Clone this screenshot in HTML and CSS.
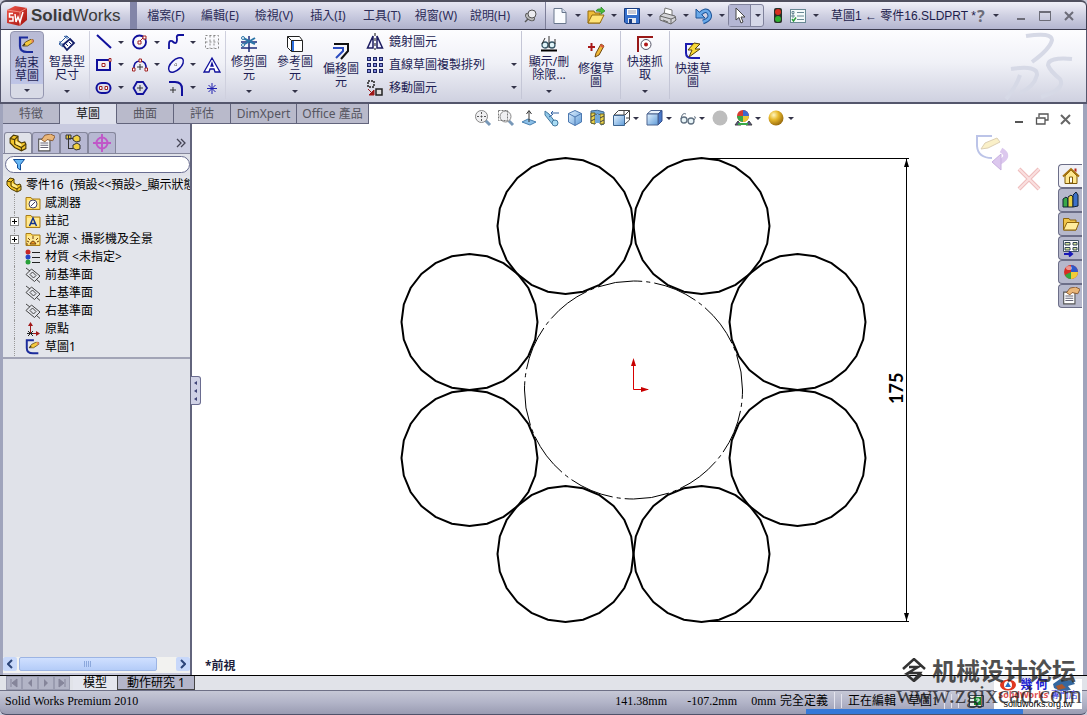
FILE: index.html
```html
<!DOCTYPE html>
<html lang="zh-Hant">
<head>
    <meta charset="UTF-8">
    <meta name="viewport" content="width=device-width, initial-scale=1.0">
    <title>草圖1 ← 零件16.SLDPRT *</title>
    <link rel="stylesheet" href="styles.css">
</head>
<body>
    <!-- Shared icons -->
    <svg class="defs" aria-hidden="true">
        <defs>
            <linearGradient id="blueGlass" x1="0" y1="0" x2="1" y2="1"><stop offset="0" stop-color="#e4f3ff"/><stop offset="1" stop-color="#5f9bd8"/></linearGradient>
            <radialGradient id="gold" cx=".35" cy=".3" r=".8"><stop offset="0" stop-color="#fff6c0"/><stop offset=".4" stop-color="#e8b92c"/><stop offset="1" stop-color="#8a5c08"/></radialGradient>
            <linearGradient id="redCube" x1="0" y1="0" x2="1" y2="1"><stop offset="0" stop-color="#f0564a"/><stop offset="1" stop-color="#a3100c"/></linearGradient>
            <symbol id="pencil" viewBox="0 0 12 8"><path d="M0 7 3 3 9 0 11 1 11 3 5 7Z" fill="#f4c83c" stroke="#54400c" stroke-width=".8"/><path d="M9 0 11 1 11 3 9 4Z" fill="#e08060"/><path d="M0 7 2 4.500 3 6Z" fill="#222"/></symbol>
            <symbol id="sketch" viewBox="0 0 18 18"><path d="M10 1.500H2V10Q2 16 9 16H15" fill="none" stroke="#1c2c9c" stroke-width="2.200"/><use href="#pencil" x="4" y="3" width="13" height="8"/></symbol>
            <symbol id="part" viewBox="0 0 16 16"><path d="M1 4 4 1 8 2 8 6 11 8 14 7 15 9 15 13 11 15 5 12 1 8Z" fill="#f2c52c" stroke="#4c3a04"/><path d="M1 4 5 5 8 2M5 5V9L11 12 15 9M11 12V15" fill="none" stroke="#4c3a04"/><path d="M6 6 11 9 11 11 6 9Z" fill="#ffeb8c"/></symbol>
            <symbol id="folder" viewBox="0 0 16 16"><path d="M1 2.500H6L7 4H15V14.500H1Z" fill="#ffdc60" stroke="#a87c18"/><path d="M2 5H14V13H2Z" fill="#ffe994"/></symbol>
            <symbol id="plane" viewBox="0 0 16 16"><path d="M1 7.500 6.500 2 15 9 9.500 14.500ZM1 1 5 4M11 12 15 15.500M5 7.500 7.500 5 11 8.500 8.500 11Z" fill="none" stroke="#444"/></symbol>
            <symbol id="hand" viewBox="0 0 16 16"><path d="M1.500 4.500H11.500V15H1.500Z" fill="#fff" stroke="#555"/><path d="M3 8H10M3 10H10M3 12H10" stroke="#667"/><path d="M4 5 7 1 12 0 16 2 14 6 9 5 7 7Z" fill="#eab678" stroke="#7a4a20" stroke-width=".7"/></symbol>
        </defs>
    </svg>

    <header class="titlebar">
        <div class="brand">
            <svg width="22" height="22" viewBox="0 0 22 22"><path d="M1 5 9 1 21 3V15L14 21 1 18Z" fill="url(#redCube)"/><path d="M1 5 14 7 21 3M14 7V21" stroke="#ffb0a0" fill="none" stroke-width=".7"/><path d="M7 8.500H3.500V12H7V16H3M9 9 10 17 12 12 14 17 17 7" fill="none" stroke="#fff" stroke-width="1.500"/></svg>
            <span><b>Solid</b>Works</span>
        </div>
        <nav class="menu">
            <button>檔案(F)</button>
            <button>編輯(E)</button>
            <button>檢視(V)</button>
            <button>插入(I)</button>
            <button>工具(T)</button>
            <button>視窗(W)</button>
            <button>說明(H)</button>
            <button class="pin" aria-label="釘選"><svg width="14" height="14" viewBox="0 0 14 14"><path d="M1 13 5 9" stroke="#555" stroke-width="1.500"/><ellipse cx="6" cy="8" rx="5" ry="3" transform="rotate(35 6 8)" fill="#bbb" stroke="#555"/><circle cx="8" cy="5" r="4" fill="#ececf0" stroke="#555"/></svg></button>
        </nav>
        <div class="quick">
            <button class="split" aria-label="新增"><svg width="18" height="18" viewBox="0 0 18 18"><path d="M3 1.500H11L15 5.500V16.500H3Z" fill="#fafcff" stroke="#68768c"/><path d="M11 1.500V5.500H15" fill="#d4dff0" stroke="#68768c"/></svg><i class="drop"></i></button>
            <button class="split" aria-label="開啟"><svg width="18" height="18" viewBox="0 0 18 18"><path d="M1 4H7L8 6H13V16H1Z" fill="#eebc38" stroke="#936b0c"/><path d="M1 16 5 8H17L13 16Z" fill="#ffe478" stroke="#936b0c"/><path d="M9 4Q10 1 14 2V0L18 4 14 7V5Q11 4 9 4Z" fill="#48bc38" stroke="#207820" stroke-width=".6"/></svg><i class="drop"></i></button>
            <button class="split" aria-label="儲存"><svg width="18" height="18" viewBox="0 0 18 18"><path d="M1.500 1.500H16.500V16.500H3L1.500 15Z" fill="#3670cc" stroke="#183c80"/><path d="M4 2H14V8H4Z" fill="#fff"/><path d="M5 4H13M5 6H13" stroke="#99a"/><path d="M5 11H13V16H5Z" fill="#e4e8f0"/><path d="M6 12H9V16H6Z" fill="#183c80"/></svg><i class="drop"></i></button>
            <button class="split" aria-label="列印"><svg width="18" height="18" viewBox="0 0 18 18"><path d="M5 8 6 1 13 3 13 9Z" fill="#fff" stroke="#777"/><path d="M1 9 5 6 16 9 17 13 12 17 1 13Z" fill="#d4d4d8" stroke="#666"/><path d="M1 9 12 12 17 10M12 12V17M4 13 9 15" stroke="#666" fill="none"/></svg><i class="drop"></i></button>
            <button class="split" aria-label="復原"><svg width="18" height="18" viewBox="0 0 18 18"><path d="M5 7Q11 1 14 6Q17 12 8 15" fill="none" stroke="#1c5498" stroke-width="4.500"/><path d="M1 2V11H10Z" fill="#68a8e8" stroke="#1c5498"/><path d="M5 7Q11 1 14 6Q17 12 8 15" fill="none" stroke="#68a8e8" stroke-width="2.500"/></svg><i class="drop"></i></button>
            <button class="split picked" aria-label="選取"><span><svg width="12" height="18" viewBox="0 0 12 18"><path d="M2 1V13L5 10.500 7 16 9 15 7 10H11Z" fill="#fff" stroke="#444"/></svg></span><i class="drop"></i></button>
            <button class="plain" aria-label="重新計算"><svg width="10" height="18" viewBox="0 0 10 18"><rect x="1" y="1" width="8" height="15" rx="2" fill="#283028"/><circle cx="5" cy="5" r="3" fill="#d83020"/><circle cx="5" cy="12" r="3" fill="#30b030"/></svg></button>
            <button class="split" aria-label="選項"><svg width="18" height="18" viewBox="0 0 18 18"><rect x="1.500" y="2.500" width="15" height="13" fill="#f4fafa" stroke="#688894"/><path d="M8 5.500H15M8 9H15M8 12.500H15" stroke="#688894"/><path d="M3 4.500H5V6.500H3ZM3 8H5V10H3Z" fill="none" stroke="#688894"/><path d="M3 12 4.500 14 7 10.500" fill="none" stroke="#2c9c3c" stroke-width="1.500"/></svg><i class="drop"></i></button>
        </div>
        <h1 class="doc-name">草圖1 ← 零件16.SLDPRT *</h1>
        <div class="window-buttons">
            <button class="split help" aria-label="說明">?<i class="drop"></i></button>
            <button aria-label="最小化"><svg width="12" height="12"><path d="M2 9H10" stroke="#6c6c78" stroke-width="2"/></svg></button>
            <button aria-label="最大化"><svg width="12" height="12"><path d="M.5 1.500H11.500V10.500H.5Z" fill="none" stroke="#6c6c78"/><path d="M0 2H12" stroke="#6c6c78" stroke-width="2"/></svg></button>
            <button aria-label="關閉"><svg width="12" height="12"><path d="M2 2 10 10M10 2 2 10" stroke="#6c6c78" stroke-width="2"/></svg></button>
        </div>
    </header>

    <section class="ribbon">
        <button class="tool exit">
            <svg width="18" height="18"><use href="#sketch"/></svg>
            <span>結束<br>草圖</span><i class="drop"></i>
        </button>
        <button class="tool">
            <svg width="18" height="18" viewBox="0 0 18 18"><path d="M5 10 12 4 16 8 9 15Z" fill="#fff" stroke="#101c68" stroke-width="1.800"/><path d="M1 9 9 1M1 9 5 12M9 1 12 4M2 6 2 9 5 9M6 1.500 9 1 9 4" fill="none" stroke="#2f5ca0"/><path d="M8 9 10 11M11 7 13 9" stroke="#101c68"/></svg>
            <span>智慧型<br>尺寸</span><i class="drop"></i>
        </button>
        <div class="sketch-grid">
            <button class="split" aria-label="直線"><svg width="18" height="18"><path d="M2 2 16 15" stroke="#10109c" stroke-width="2"/></svg><i class="drop"></i></button>
            <button class="split" aria-label="圓"><svg width="18" height="18"><circle cx="8.500" cy="9" r="6.500" fill="none" stroke="#10109c" stroke-width="1.800"/><path d="M8 9 13 4" stroke="#a02020"/><path d="M7 8H10V11H7ZM12 3H15V6H12Z" fill="#fff" stroke="#a02020"/></svg><i class="drop"></i></button>
            <button class="split" aria-label="不規則曲線"><svg width="18" height="18"><path d="M2 16V11Q2 7 5 8Q10 13 10 6Q9 2 12 2H17" fill="none" stroke="#10109c" stroke-width="1.800"/></svg><i class="drop"></i></button>
            <button class="split" aria-label="網格"><svg width="18" height="18"><path d="M2.500 2.500H15.500V15.500H2.500ZM2.500 9H15.500M7 2.500V15.500M11 2.500V15.500" fill="none" stroke="#888" stroke-dasharray="2 2"/></svg></button>
            <button class="split" aria-label="矩形"><svg width="18" height="18"><path d="M2 4H15V14H2Z" fill="none" stroke="#10109c" stroke-width="2"/><path d="M7 7.500H10V10.500H7ZM14 2.500H16V5.500H14Z" fill="#fff" stroke="#a02020"/></svg><i class="drop"></i></button>
            <button class="split" aria-label="弧"><svg width="18" height="18"><path d="M3 14Q2 5 9 5Q16 5 15 14" fill="none" stroke="#10109c" stroke-width="1.500"/><path d="M6 11H12M9 8V14" stroke="#333"/><path d="M1.500 12H4V15H1.500ZM14 12H16.500V15H14ZM8 3H10.500V6H8Z" fill="#fff" stroke="#a02020"/></svg><i class="drop"></i></button>
            <button class="split" aria-label="橢圓"><svg width="18" height="18"><ellipse cx="9" cy="9" rx="9" ry="5" transform="rotate(-43 9 9)" fill="#f4f4ff" stroke="#10109c" stroke-width="1.500"/><path d="M7 9H11M9 7V11" stroke="#666" stroke-dasharray="1 1"/></svg><i class="drop"></i></button>
            <button class="split" aria-label="文字"><svg width="18" height="18"><path d="M1 16 9 2 17 16H12L11 13H7L6 16ZM8 10H10L9 7Z" fill="#fff" stroke="#10109c" stroke-width="1.300"/></svg></button>
            <button class="split" aria-label="狹槽"><svg width="18" height="18"><rect x="1.500" y="4" width="14" height="10" rx="5" fill="none" stroke="#10109c" stroke-width="2"/><path d="M4.500 7.500H7V10.500H4.500ZM10 7.500H12.500V10.500H10Z" fill="#fff" stroke="#a02020"/></svg><i class="drop"></i></button>
            <button class="split" aria-label="多邊形"><svg width="18" height="18"><path d="M6 3H12L16 9 12 15H6L2.500 9Z" fill="none" stroke="#10109c" stroke-width="1.800"/><path d="M6 9H12M9 6V12" stroke="#333"/></svg></button>
            <button class="split" aria-label="圓角"><svg width="18" height="18"><path d="M2 3H8Q15 3 15 10V17" fill="none" stroke="#10109c" stroke-width="2"/><path d="M3 11H9M6 8V14" stroke="#333"/></svg><i class="drop"></i></button>
            <button class="split" aria-label="點"><svg width="18" height="18"><path d="M9 4V15M4 9.500H14M5.500 6 12.500 13M12.500 6 5.500 13" stroke="#2020b0"/></svg></button>
        </div>
        <button class="tool">
            <svg width="18" height="18"><path d="M1 7H17M1 13H17M9 1V17" stroke="#1c2c7c" stroke-width="1.500"/><path d="M3 3 15 9M3 10 15 3" stroke="#2d76a8" stroke-width="2"/><circle cx="3" cy="3" r="1.500" fill="#fff" stroke="#2d76a8"/><circle cx="3" cy="10" r="1.500" fill="#fff" stroke="#2d76a8"/></svg>
            <span>修剪圖<br>元</span><i class="drop"></i>
        </button>
        <button class="tool">
            <svg width="18" height="18"><path d="M1.500 1.500H13.500L16.500 5.500V16.500H5.500L1.500 12.500ZM1.500 1.500 5.500 5.500H16.500M5.500 5.500V16.500" fill="#fff" stroke="#222"/><path d="M6 6H8V16H6Z" fill="#2c70e0"/></svg>
            <span>參考圖<br>元</span><i class="drop"></i>
        </button>
        <button class="tool no-drop">
            <svg width="18" height="18"><path d="M2 2H16V9L9 17" fill="none" stroke="#111" stroke-width="2"/><path d="M1 6H11V9L4 16" fill="none" stroke="#2c4cc0" stroke-width="2"/></svg>
            <span>偏移圖<br>元</span>
        </button>
        <div class="tool-list">
            <button><svg width="18" height="18"><path d="M7 3 1.500 15H7ZM11 3 16.500 15H11Z" fill="#eef" stroke="#1c1c60" stroke-width="1.500"/><path d="M9 0V17" stroke="#111" stroke-dasharray="3 2"/></svg>鏡射圖元</button>
            <button><svg width="18" height="18"><path d="M1 1H5V5H1ZM7 1H11V5H7ZM13 1H17V5H13ZM1 7H5V11H1ZM7 7H11V11H7ZM13 7H17V11H13ZM1 13H5V17H1ZM7 13H11V17H7ZM13 13H17V17H13Z" fill="#1c2464"/><path d="M2 2H4V4H2ZM8 2H10V4H8ZM14 2H16V4H14ZM2 8H4V10H2ZM8 8H10V10H8ZM14 8H16V10H14ZM2 14H4V16H2ZM8 14H10V16H8ZM14 14H16V16H14Z" fill="#8088d8"/></svg>直線草圖複製排列<i class="drop"></i></button>
            <button><svg width="18" height="18"><path d="M2 2H8V8H2Z" fill="none" stroke="#222" stroke-width="1.500" stroke-dasharray="2 1"/><path d="M10 10H16V16H10Z" fill="#ddd" stroke="#222" stroke-width="1.500"/><path d="M2 10 6 14M3 16H8V11Z" fill="#a01818" stroke="#a01818"/></svg>移動圖元<i class="drop"></i></button>
        </div>
        <button class="tool">
            <svg width="18" height="18"><circle cx="5" cy="10" r="3" fill="#e0f4f8" stroke="#385868" stroke-width="1.300"/><circle cx="12" cy="10" r="3" fill="#e0f4f8" stroke="#385868" stroke-width="1.300"/><path d="M2 9 5 3M15 9 15 4M9 1V13" fill="none" stroke="#333"/><path d="M1 15.500H17" stroke="#000" stroke-width="2"/></svg>
            <span>顯示/刪<br>除限...</span><i class="drop"></i>
        </button>
        <button class="tool no-drop last">
            <svg width="18" height="18"><path d="M1 5H8M4.500 1V9" stroke="#a81818" stroke-width="2"/><path d="M8 15 9 11 14 2 17 4 12 13Z" fill="#f0b838" stroke="#70480c"/><path d="M14 2 17 4 16 6 13 4Z" fill="#d85840"/></svg>
            <span>修復草<br>圖</span>
        </button>
        <button class="tool last">
            <svg width="18" height="18"><path d="M2 17V2H17" fill="none" stroke="#981818" stroke-width="2"/><circle cx="10" cy="9.500" r="5" fill="#fff" stroke="#556"/><circle cx="10" cy="9.500" r="2" fill="#b01818"/></svg>
            <span>快速抓<br>取</span><i class="drop"></i>
        </button>
        <button class="tool no-drop">
            <svg width="18" height="18"><path d="M9 2H2V11Q2 16 8 16H16" fill="none" stroke="#1c1cb0" stroke-width="2"/><path d="M10 1 4 8H8L5 15 16 7H11L16 2Z" fill="#f8d838" stroke="#584408"/></svg>
            <span>快速草<br>圖</span>
        </button>
        <svg class="ds-logo" width="70" height="70" viewBox="-4 0 70 70"><path d="M18 5Q44 1 44 9Q42 18 24 31"/><path d="M3 38Q30 34 29 44Q26 56 12 62M12 44Q8 56-2 68"/><path d="M64 28Q40 26 40 34Q42 40 52 48Q58 58 33 66"/></svg>
    </section>

    <main class="workspace">
        <nav class="ribbon-tabs">
            <button>特徵</button>
            <button class="active">草圖</button>
            <button>曲面</button>
            <button>評估</button>
            <button class="wide">DimXpert</button>
            <button class="wider">Office 產品</button>
        </nav>

        <div class="body">
            <aside class="manager">
                <div class="manager-tabs">
                    <button class="active" aria-label="特徵管理員"><svg width="18" height="18"><use href="#part"/></svg></button>
                    <button aria-label="屬性"><svg width="18" height="18"><use href="#hand"/></svg></button>
                    <button aria-label="模型組態"><svg width="18" height="18"><path d="M3.500 1V15M3.500 4.500H8M3.500 14.500H8M1 1H6V5H1Z" fill="#e8c838" stroke="#333"/><path d="M8 3 12 1 15 3V7L11 8 8 6ZM8 11 12 9 15 11V15L11 16 8 14Z" fill="#f0d040" stroke="#333"/></svg></button>
                    <button aria-label="尺寸專家"><svg width="18" height="18"><circle cx="9" cy="9" r="5.500" fill="none" stroke="#c058c8" stroke-width="2"/><path d="M9 0V18M0 9H18" stroke="#c058c8" stroke-width="2"/></svg></button>
                    <button class="more" aria-label="更多"><svg width="10" height="10"><path d="M1 1 5 5 1 9M5 1 9 5 5 9" fill="none" stroke="#445" stroke-width="1.300"/></svg></button>
                </div>
                <label class="filter">
                    <svg width="12" height="13"><path d="M.5 1.500H11.500L7.500 6.500V12L4.500 10V6.500Z" fill="#68b8f4" stroke="#104c98"/></svg>
                    <input type="text" aria-label="篩選">
                </label>
                <ul class="tree">
                    <li class="root"><svg width="16" height="16"><use href="#part"/></svg>零件16&nbsp; (預設&lt;&lt;預設&gt;_顯示狀態</li>
                    <li><svg width="16" height="16"><use href="#folder"/><circle cx="8" cy="9" r="4" fill="#fff" stroke="#446"/><path d="M6 11 10 7" stroke="#446"/></svg>感測器</li>
                    <li><button class="expand" aria-label="展開"></button><svg width="16" height="16"><use href="#folder"/><path d="M4.500 13 8 5 11.500 13M6 10.500H10" stroke="#14348c" stroke-width="1.500" fill="none"/></svg>註記</li>
                    <li><button class="expand" aria-label="展開"></button><svg width="16" height="16"><use href="#folder"/><path d="M5 13Q8 7 11 13ZM3 13H1M8 8V5M5 9 3 7M11 9 13 7M4 11 2 10M12 11 14 10" fill="#f4a020" stroke="#704010"/></svg>光源、攝影機及全景</li>
                    <li><svg width="16" height="16"><circle cx="3" cy="3" r="2.500" fill="#c82828"/><circle cx="3" cy="8" r="2.500" fill="#2848c8"/><circle cx="3" cy="13" r="2.500" fill="#28a038"/><path d="M7 3.500H15M7 8.500H15M7 13.500H15" stroke="#222"/></svg>材質 &lt;未指定&gt;</li>
                    <li><svg width="16" height="16"><use href="#plane"/></svg>前基準面</li>
                    <li><svg width="16" height="16"><use href="#plane"/></svg>上基準面</li>
                    <li><svg width="16" height="16"><use href="#plane"/></svg>右基準面</li>
                    <li><svg width="16" height="16"><path d="M5.500 12V3M5 12.500H13" stroke="#a01818"/><path d="M5.500 1 8 5H3ZM15 12.500 11 10V15Z" fill="#a01818"/><path d="M3 10 8 15M8 10 3 15M2 12.500H8" stroke="#222"/></svg>原點</li>
                    <li><svg width="16" height="16"><use href="#sketch"/></svg>草圖1</li>
                </ul>
                <div class="scrollbar">
                    <button aria-label="向左"><svg width="6" height="10"><path d="M5 1 1 5 5 9" fill="none" stroke="#2c4478" stroke-width="2"/></svg></button>
                    <div class="thumb"></div>
                    <button aria-label="向右"><svg width="6" height="10"><path d="M1 1 5 5 1 9" fill="none" stroke="#2c4478" stroke-width="2"/></svg></button>
                </div>
                <button class="splitter" aria-label="收合面板"><svg width="5" height="22"><path d="M4 1V5L1 3ZM4 9V13L1 11ZM4 17V21L1 19Z" fill="#404478"/></svg></button>
            </aside>

            <section class="canvas">
                <svg class="drawing" viewBox="192 124 891 551" preserveAspectRatio="xMinYMin slice">
                    <defs>
                        <polygon id="ring" points="0,-68 17.600,-65.700 34,-58.900 48.100,-48.100 58.900,-34 65.700,-17.600 68,0 65.700,17.600 58.900,34 48.100,48.100 34,58.900 17.600,65.700 0,68 -17.600,65.700 -34,58.900 -48.100,48.100 -58.900,34 -65.700,17.600 -68,0 -65.700,-17.600 -58.900,-34 -48.100,-48.100 -34,-58.900 -17.600,-65.700"/>
                    </defs>
                    <g class="solid">
                        <use href="#ring" x="565.500" y="226"/><use href="#ring" x="701.500" y="226"/>
                        <use href="#ring" x="469.500" y="322"/><use href="#ring" x="797.500" y="322"/>
                        <use href="#ring" x="469.500" y="458"/><use href="#ring" x="797.500" y="458"/>
                        <use href="#ring" x="565.500" y="554"/><use href="#ring" x="701.500" y="554"/>
                    </g>
                    <circle class="construction" cx="633.500" cy="390" r="109"/>
                    <path class="dimension" d="M702 158.500H909M702 621.500H909M906.500 159V621"/>
                    <path d="M906.500 159 909 167H904ZM906.500 621 909 613H904Z"/>
                    <text class="dim-text" transform="translate(903 404) rotate(-90)">175</text>
                    <path class="origin" d="M633.500 360V389.500H648"/>
                    <path class="origin-head" d="M633.500 358 636 366H631ZM649 389.500 641 387V392Z"/>
                </svg>
                <span class="view-name">*前視</span>
            </section>
        </div>

        <!-- Tools floating over the model view -->
        <div class="view-tools">
            <button aria-label="最適當大小"><svg width="18" height="18"><path d="M11 11 16 16" stroke="#7898b8" stroke-width="3"/><circle cx="7.500" cy="7.500" r="6" fill="#f0f0f2" stroke="#888"/><path d="M7.500 3V12M3 7.500H12" stroke="#555" stroke-dasharray="2 1.500"/></svg></button>
            <button aria-label="局部放大"><svg width="18" height="18"><path d="M11 11 16 16" stroke="#7898b8" stroke-width="3"/><circle cx="8.500" cy="7.500" r="5.500" fill="#f0f0f2" stroke="#888"/><path d="M1.500 1.500H10.500V11.500H1.500Z" fill="none" stroke="#777" stroke-dasharray="2 1"/></svg></button>
            <button aria-label="正視於"><svg width="18" height="18"><path d="M2 13 8 10 16 13 10 16Z" fill="#8cc0e8" stroke="#4880b0"/><path d="M9 13V2M6.500 5 9 1.500 11.500 5" fill="none" stroke="#333"/></svg></button>
            <button aria-label="前一視角"><svg width="18" height="18"><path d="M2 2 6 5 13 14 10 16 2 6Z" fill="#90c8e8" stroke="#4478a0"/><path d="M8 4H16M10 2 8 4 10 6M6 8 9 6" fill="none" stroke="#3060a0"/><circle cx="12" cy="14" r="3" fill="#a8dcf4" stroke="#4478a0"/></svg></button>
            <button aria-label="等角視"><svg width="18" height="18"><path d="M9 1.500 15.500 4.500V13L9 16.500 2.500 13V4.500Z" fill="url(#blueGlass)" stroke="#4c78b0"/><path d="M2.500 4.500 9 8 15.500 4.500M9 8V16.500" fill="none" stroke="#4c78b0"/></svg></button>
            <button aria-label="剖面視角"><svg width="18" height="18"><path d="M2 2Q8 0 15 3V15L12 16V6Q8 4 6 6V15L2 14Z" fill="#70a8d8" stroke="#3c6490"/><path d="M2 4H6V15L2 14ZM11 5H15V15H11Z" fill="#ecd44c" stroke="#6c6420"/><path d="M6 6H11V14H6Z" fill="#70a8d8"/><path d="M2 8 6 6M2 12 6 10M11 9 15 7M11 13 15 11" stroke="#444"/></svg></button>
            <button class="split" aria-label="視角方位"><svg width="20" height="18"><path d="M6.500 1.500H17.500V11L13 15M12 1.500V6M6.500 1.500 2 6M2 6 13 6 17.500 1.500M14 9H18" fill="none" stroke="#444"/><path d="M1.500 6.500H12.500V16.500H1.500Z" fill="url(#blueGlass)" stroke="#3c6490"/></svg><i class="drop"></i></button>
            <button class="split" aria-label="顯示樣式"><svg width="20" height="18"><path d="M2 5 6 1.500H17L13 5Z" fill="#e8f2fc" stroke="#4c6490"/><path d="M13 5 17 1.500V12L13 16Z" fill="#4878c8" stroke="#34508c"/><path d="M2 5H13V16H2Z" fill="url(#blueGlass)" stroke="#4c6490"/></svg><i class="drop"></i></button>
            <button class="split" aria-label="隱藏/顯示"><svg width="20" height="18"><circle cx="6" cy="11" r="3" fill="#e8f4f8" stroke="#607080" stroke-width="1.300"/><circle cx="13" cy="12" r="3" fill="#e8f4f8" stroke="#607080" stroke-width="1.300"/><path d="M3 10Q4 3 8 5M16 11Q19 7 16 8" fill="none" stroke="#607080"/></svg><i class="drop"></i></button>
            <button aria-label="編輯外觀"><svg width="18" height="18"><circle cx="9" cy="9" r="7.500" fill="#bdbdbd"/></svg></button>
            <button class="split" aria-label="套用全景"><svg width="20" height="18"><path d="M1 16 4 12 7 16ZM12 16 15 12 18 16Z" fill="#558" stroke="#444"/><circle cx="9" cy="7" r="6" fill="#d83c30"/><path d="M9 7V1A6 6 0 0 1 15 7Z" fill="#3c68d0"/><path d="M9 7H15A6 6 0 0 1 9 13Z" fill="#e8c838"/><path d="M9 7V13A6 6 0 0 1 3 7Z" fill="#38a848"/><path d="M4 15H14" stroke="#38a848" stroke-width="2"/></svg><i class="drop"></i></button>
            <button class="split" aria-label="檢視設定"><svg width="20" height="18"><circle cx="9" cy="9" r="7.500" fill="url(#gold)"/></svg><i class="drop"></i></button>
        </div>
        <div class="doc-buttons">
            <button aria-label="最小化"><svg width="14" height="14"><path d="M3 10H11" stroke="#555" stroke-width="2"/></svg></button>
            <button aria-label="還原"><svg width="14" height="14"><path d="M4 5V2H13V8H10M1.500 6H10V12H1.500Z" fill="none" stroke="#555" stroke-width="1.300"/></svg></button>
            <button aria-label="關閉"><svg width="14" height="14"><path d="M3 3 12 12M12 3 3 12" stroke="#666" stroke-width="2"/></svg></button>
        </div>
        <div class="confirm">
            <button aria-label="確定"><svg width="34" height="38"><path d="M16 2H1V12Q2 24 16 24" fill="none" stroke="#bcc4e8" stroke-width="2"/><path d="M5 15 9 9 21 4 24 8 12 14Z" fill="#faf0c8" stroke="#dccfb4"/><path d="M25 16Q35 22 24 28" fill="none" stroke="#dcc8ee" stroke-width="5"/><path d="M16 28 25 20V36Z" fill="#dcc8ee" stroke="#c8b0e0"/></svg></button>
            <button class="cancel" aria-label="取消"><svg width="24" height="24"><path d="M2 2 22 22M22 2 2 22" stroke="#eebcbc" stroke-width="4"/><path d="M2 2 22 22M22 2 2 22" stroke="#fae0e0" stroke-width="2"/></svg></button>
        </div>
        <nav class="task-pane">
            <button class="active" aria-label="首頁"><svg width="18" height="18"><path d="M3 9V16.500H15V9L9 3Z" fill="#ffe890" stroke="#7c5808"/><path d="M1 9.500 9 2 17 9.500" fill="none" stroke="#a87410" stroke-width="2"/><path d="M7.500 10H10.500V16H7.500Z" fill="#fff" stroke="#7c5808"/><path d="M12.500 1.500H14.500V5L12.500 4Z" fill="#b82818"/></svg></button>
            <button aria-label="設計庫"><svg width="18" height="18"><path d="M1 8 4 6 6 8V16H1Z" fill="#38a848" stroke="#123"/><path d="M6 6 9 4 11 6V16H6Z" fill="#e8d040" stroke="#123"/><path d="M11 4 14 1 16 4V15L11 16Z" fill="#3c70c8" stroke="#123"/></svg></button>
            <button aria-label="檔案總管"><svg width="18" height="18"><path d="M1.500 3.500H7L8 5H14V15H1.500Z" fill="#f0c448" stroke="#8c640c"/><path d="M1.500 15 5 7.500H17L14 15Z" fill="#ffec9c" stroke="#8c640c"/></svg></button>
            <button aria-label="視圖調色盤"><svg width="18" height="18"><path d="M1.500 1.500H16.500V12.500H1.500Z" fill="#fff" stroke="#456"/><path d="M3 3.500H8V6H3ZM3 8.500H8V11H3ZM11 3.500H15V6H11ZM11 8.500H15V11H11Z" fill="#d8e89c" stroke="#345"/><path d="M2 15H9M7 12.500 10 15 7 17.500" fill="none" stroke="#1818b8" stroke-width="2"/></svg></button>
            <button aria-label="外觀"><svg width="18" height="18"><circle cx="9" cy="9" r="7" fill="#d82c20"/><path d="M9 9V2A7 7 0 0 1 16 9Z" fill="#3058c8"/><path d="M9 9H16A7 7 0 0 1 9 16Z" fill="#f0cc38"/><path d="M9 9V16A7 7 0 0 1 3 12Z" fill="#30a840"/><ellipse cx="7" cy="5" rx="3" ry="2" fill="#fff" opacity=".5"/></svg></button>
            <button aria-label="自訂屬性"><svg width="18" height="18"><use href="#hand"/></svg></button>
        </nav>
    </main>

    <nav class="model-tabs">
        <button class="nav" disabled aria-label="第一個"><svg width="10" height="10"><path d="M2 1V9M8 1V9L3 5Z" fill="#85859a" stroke="#85859a"/></svg></button>
        <button class="nav" disabled aria-label="上一個"><svg width="10" height="10"><path d="M7 1V9L3 5Z" fill="#85859a"/></svg></button>
        <button class="nav" disabled aria-label="下一個"><svg width="10" height="10"><path d="M3 1V9L7 5Z" fill="#85859a"/></svg></button>
        <button class="nav" disabled aria-label="最後一個"><svg width="10" height="10"><path d="M8 1V9M2 1V9L7 5Z" fill="#85859a" stroke="#85859a"/></svg></button>
        <button class="tab active">模型</button>
        <button class="tab study">動作研究 1</button>
    </nav>

    <footer class="status">
        <span class="product">Solid Works Premium 2010</span>
        <span class="coord">141.38mm</span>
        <span class="coord">-107.2mm</span>
        <span class="depth">0mm</span>
        <span class="cell">完全定義</span>
        <span class="cell gap"></span>
        <span class="cell">正在編輯‧草圖1</span>
        <span class="cell gap"></span>
        <span class="cell gap"></span>
        <svg class="help-mark" width="15" height="14"><path d="M.5 1.500H14.500V12.500H.5Z" fill="#e8ece8" stroke="#345"/><path d="M5 3H12V11H5Z" fill="#188830"/><path d="M7 5H10V7H8V9" fill="none" stroke="#fff"/></svg>
        <div class="progress"></div>
    </footer>

    <div class="sponsor">
        <div class="sponsor-top">
            <svg width="16" height="12"><ellipse cx="8" cy="6" rx="8" ry="5.500" fill="#e03820"/><circle cx="8" cy="6" r="4" fill="#fff"/><path d="M8 3 11 8H5Z" fill="#2870c0"/></svg>
            <b>幾 何</b>
            <svg width="24" height="14"><path d="M1 6 8 1 13 3 20 2 23 6 16 8 19 12 8 13 2 10Z" fill="#3468a0"/><path d="M4 8 10 6 14 10 6 12Z" fill="#a85830"/></svg>
        </div>
        <div class="sponsor-mid"><b>SolidWorks</b> <span>專門店</span></div>
        <div class="sponsor-url">solidworks.org.tw</div>
    </div>
    <div class="watermark">
        <div class="mark-name"><svg width="24" height="24"><path d="M1 11 12 1 23 11M7 9H16L6 15H18L12 22M4 16 12 23 20 16" fill="none" stroke="#333" stroke-width="2.500"/></svg>机械设计论坛</div>
        <div class="mark-url">www.zgjxcad.com</div>
    </div>
</body>
</html>
```
FILE: styles.css
```css
* {
    box-sizing: border-box;
}
body {
    margin: 0;
    min-height: 100vh;
    display: flex;
    flex-direction: column;
    position: relative;
    overflow: hidden;
    background: #c9cad9;
    color: #000;
    font-family: "Noto Sans", "Noto Sans CJK TC", sans-serif;
    font-size: 12px;
    line-height: 18px;
}
button {
    padding: 0;
    border: 0;
    background: none;
    color: inherit;
    font: inherit;
    display: flex;
    align-items: center;
    justify-content: center;
}
svg {
    display: block;
    flex: none;
}
.defs {
    position: absolute;
    width: 0;
    height: 0;
}
.drop {
    border: 3px solid transparent;
    border-top-color: #333348;
    border-bottom: 0;
    flex: none;
}
.split {
    width: 36px;
    gap: 6px;
    justify-content: flex-start;
}

/* Title bar */
.titlebar {
    height: 30px;
    display: flex;
    align-items: stretch;
    background: linear-gradient(#f0f0f8, #cfd0e2 50%, #b4b6d0);
    border: 1px solid #3c3c50;
    border-top: 2px solid #50505f;
    border-radius: 6px 6px 0 0;
    color: #1d1d4c;
}
.brand {
    width: 129px;
    flex: none;
    padding-left: 5px;
    display: flex;
    align-items: center;
    gap: 3px;
    font: 17px "Liberation Sans", sans-serif;
    color: #3a3a3a;
}
.menu {
    display: flex;
    border-left: 7px solid #8285a8;
    border-right: 1px solid #7c7e98;
    padding-left: 2px;
    background: linear-gradient(#e6e6f2, #c4c6dc 60%, #b0b2cc);
}
.menu button {
    width: 54px;
    color: #2c2c58;
}
.menu .pin {
    width: 28px;
}
.quick {
    display: flex;
    align-items: center;
    padding-left: 5px;
}
.quick .plain {
    width: 22px;
}
.quick .picked {
    height: 23px;
    margin: 0 3px 0 -3px;
    border: 1px solid #80829c;
    border-radius: 3px;
    background: #d6d8e8;
    gap: 4px;
}
.picked span {
    height: 21px;
    width: 22px;
    padding: 2px 5px;
    background: #b4b6d4;
    border-right: 1px solid #80829c;
}
.doc-name {
    margin: 0 0 0 6px;
    font: 12px/28px "Liberation Sans", "Noto Sans CJK TC", sans-serif;
    white-space: nowrap;
}
.window-buttons {
    margin-left: auto;
    padding-right: 11px;
    display: flex;
    align-items: center;
    gap: 12px;
}
.window-buttons .help {
    width: 26px;
    gap: 8px;
    font-size: 16px;
    font-weight: bold;
    color: #6c6c78;
}

/* Command ribbon */
.ribbon {
    height: 74px;
    display: flex;
    align-items: stretch;
    padding: 1px 12px 3px 9px;
    border: 1px solid #54566c;
    border-width: 0 1px 2px;
    background: linear-gradient(#fdfdff, #f0f1f7 45%, #cfd1e0);
    color: #1d1d54;
}
.tool {
    width: 46px;
    flex: none;
    padding: 4px 0 3px;
    flex-direction: column;
    justify-content: flex-start;
    line-height: 13px;
    white-space: nowrap;
}
.tool span {
    margin-top: 2px;
}
.tool .drop {
    margin-top: auto;
    margin-bottom: 3px;
}
.tool.no-drop {
    padding-top: 11px;
}
.tool.last {
    width: 49px;
    border-right: 1px solid #c4c6d6;
}
.tool.exit {
    width: 34px;
    margin-right: 5px;
    border: 1px solid #9496b0;
    border-radius: 4px;
    background: linear-gradient(#b8bad4, #bec4e6 78%, #d8dae6 79%);
}
.exit + .tool {
    width: 36px;
}
.sketch-grid {
    display: grid;
    grid-template-columns: repeat(3, 36px) 22px;
    margin-left: 4px;
    padding-left: 5px;
    border: 1px solid #cfd0de;
    border-width: 0 1px;
}
.sketch-grid .split {
    gap: 5px;
    width: auto;
}
.tool-list {
    width: 158px;
    padding-left: 2px;
    margin-right: 4px;
    display: grid;
    border-right: 1px solid #c4c6d6;
}
.tool-list button {
    gap: 5px;
    justify-content: flex-start;
}
.tool-list .drop {
    margin-left: auto;
    margin-right: 4px;
}
.ds-logo {
    margin-left: auto;
    fill: none;
    stroke: #d6d9e6;
    stroke-width: 4;
    stroke-linejoin: round;
}

/* Work area */
.workspace {
    flex: 1;
    position: relative;
    display: flex;
    flex-direction: column;
    min-height: 0;
    border: 3px solid #a0a4bc;
    border-width: 0 4px 0 3px;
    background: #fff;
}
.ribbon-tabs {
    height: 20px;
    display: flex;
    width: max-content;
}
.ribbon-tabs button {
    width: 57px;
    border: 1px solid #62647c;
    border-left-width: 0;
    border-top: 0;
    background: #b9bacb;
    color: #55555f;
}
.ribbon-tabs .active {
    background: #dfe1ec;
    border-bottom-color: #dfe1ec;
    color: #111;
}
.ribbon-tabs .wide {
    width: 66px;
}
.ribbon-tabs .wider {
    width: 72px;
}
.body {
    flex: 1;
    display: flex;
    min-height: 0;
}
.manager {
    width: 189px;
    flex: none;
    position: relative;
    z-index: 1;
    display: flex;
    flex-direction: column;
    border-right: 2px solid #62647c;
    background: #e0e2e9;
}
.manager-tabs {
    height: 30px;
    display: flex;
    align-items: flex-end;
    padding: 0 4px 0 1px;
    background: #c9cbe0;
    border-bottom: 1px solid #85879c;
}
.manager-tabs button {
    width: 28px;
    height: 21px;
    border: 1px solid #85879c;
    border-bottom: 0;
    border-radius: 3px 3px 0 0;
    background: #b7b8d2;
}
.manager-tabs .active {
    background: #e0e2e9;
}
.manager-tabs .more {
    width: 10px;
    margin-left: auto;
    border: 0;
    background: none;
}
.filter {
    height: 17px;
    margin: 2px 0 3px 2px;
    padding-left: 7px;
    display: flex;
    align-items: center;
    border: 1px solid #686c90;
    border-radius: 9px;
    background: #fff;
}
.filter input {
    flex: 1;
    min-width: 0;
    height: 14px;
    border: 0;
    background: none;
    font: inherit;
    outline: none;
}
.tree {
    margin: 0;
    padding: 0 0 1px 3px;
    list-style: none;
    overflow: hidden;
    white-space: nowrap;
    border-bottom: 2px solid #a2a4b6;
    background: #e3e5eb;
}
.tree li {
    height: 18px;
    margin-left: 8px;
    padding-left: 10px;
    display: flex;
    align-items: center;
    gap: 4px;
    position: relative;
    border-left: 1px dotted #999;
}
.tree .root {
    margin-left: 0;
    padding-left: 0;
    border: 0;
}
.expand {
    position: absolute;
    left: -5px;
    width: 9px;
    height: 9px;
    border: 1px solid #888;
    background: linear-gradient(#000, #000) center / 5px 1px no-repeat, linear-gradient(#000, #000) center / 1px 5px no-repeat, #fff;
}
.scrollbar {
    margin-top: auto;
    height: 18px;
    padding: 0 0 2px;
    display: flex;
    background: #f2f2f0;
    border-bottom: 2px solid #c6c8da;
}
.scrollbar button {
    width: 14px;
    background: #c8d8fa;
    border-radius: 2px;
}
.scrollbar .thumb {
    width: 138px;
    margin: 0 auto 0 2px;
    border: 1px solid #9cb4e4;
    border-radius: 2px;
    background: repeating-linear-gradient(90deg, #8ca8dc 0 1px, transparent 1px 2px) center / 8px 6px no-repeat, linear-gradient(#d0e0ff, #b4ccf8);
}
.splitter {
    position: absolute;
    left: 188px;
    top: 252px;
    width: 10px;
    height: 29px;
    border: 1px solid #6a6c90;
    border-left: 0;
    border-radius: 0 3px 3px 0;
    background: #d0d2e6;
}
.canvas {
    flex: 1;
    min-width: 0;
    position: relative;
    background: #fff;
}
.drawing {
    width: 100%;
    height: 100%;
}
.solid {
    fill: none;
    stroke: #000;
    stroke-width: 2;
}
.construction {
    fill: none;
    stroke: #000;
    stroke-dasharray: 45 4 4 4;
    stroke-dashoffset: 36;
}
.dimension {
    fill: none;
    stroke: #000;
}
.dim-text {
    font: bold 18px "Lato", sans-serif;
}
.origin {
    fill: none;
    stroke: #d80000;
}
.origin-head {
    fill: #c80000;
}
.view-name {
    position: absolute;
    left: 13px;
    bottom: 0;
    color: #1d1d3c;
    font-weight: bold;
}

/* Overlays on the model view */
.view-tools {
    position: absolute;
    left: 471px;
    top: 4px;
    height: 20px;
    display: flex;
    gap: 5px;
}
.view-tools .split {
    width: 28px;
    gap: 1px;
}
.doc-buttons {
    position: absolute;
    right: 11px;
    top: 8px;
    display: flex;
    gap: 9px;
}
.confirm {
    position: absolute;
    right: 42px;
    top: 30px;
    display: flex;
    align-items: flex-start;
    gap: 7px;
}
.confirm .cancel {
    margin-top: 33px;
}
.task-pane {
    position: absolute;
    right: 1px;
    top: 60px;
}
.task-pane button {
    width: 24px;
    height: 24px;
    border: 1px solid #6c6e88;
    border-right: 0;
    border-radius: 4px 0 0 4px;
    background: #b6b8cc;
}
.task-pane .active {
    background: #f0f0f6;
}

/* Bottom tabs and status bar */
.model-tabs {
    height: 16px;
    padding-left: 6px;
    display: flex;
    background: #e1e3e9;
    border-top: 1px solid #000;
    border-bottom: 1px solid #6e7086;
    line-height: 14px;
}
.model-tabs .nav {
    width: 16px;
    border: 1px solid #9a9cb0;
    background: #b2b4c6;
}
.model-tabs .tab {
    width: 44px;
    margin-left: 3px;
    background: #e4e6ee;
}
.model-tabs .study {
    width: 78px;
    margin-left: 0;
    border: 1px solid #444;
    border-top: 0;
    background: #b4b6ca;
}
.status {
    position: relative;
    height: 24px;
    padding: 0 103px 4px 5px;
    display: flex;
    align-items: center;
    background: linear-gradient(#c6c8d6, #b2b4c8 50%, #9a9cb2);
    border-bottom: 1px solid #50526a;
    border-radius: 0 0 6px 6px;
    font-family: "Liberation Serif", "Noto Sans CJK TC", serif;
    white-space: nowrap;
}
.product {
    margin-right: auto;
}
.coord {
    width: 70px;
    text-align: right;
}
.depth {
    width: 39px;
    margin-right: 4px;
    text-align: right;
}
.cell {
    padding-right: 6px;
    margin-right: 6px;
    border-right: 1px solid #e4e4ee;
}
.cell.gap {
    padding: 0;
    height: 14px;
}
.help-mark {
    margin-left: 4px;
}
.progress {
    position: absolute;
    right: 64px;
    bottom: 0;
    width: 217px;
    height: 5px;
    background: #3478d8;
}

/* Stamps in the corner */
.sponsor {
    position: absolute;
    right: 5px;
    bottom: 6px;
    width: 88px;
    height: 30px;
    background: #fff;
    text-align: center;
    line-height: 10px;
    white-space: nowrap;
}
.sponsor-top {
    display: flex;
    gap: 4px;
    height: 11px;
    align-items: center;
    justify-content: center;
    color: #2020d0;
}
.sponsor-mid {
    font-size: 9px;
    color: #3838d8;
}
.sponsor-mid b {
    color: #e05050;
}
.sponsor-url {
    font: 9px/9px "Liberation Sans", sans-serif;
}
.watermark {
    position: absolute;
    right: 5px;
    bottom: 7px;
    color: rgba(30, 30, 30, 0.8);
    white-space: nowrap;
}
.mark-name {
    display: flex;
    align-items: center;
    justify-content: flex-end;
    gap: 6px;
    height: 25px;
    margin-right: 6px;
    font: bold 24px/25px "Noto Sans CJK SC", sans-serif;
}
.mark-url {
    font: 25px/26px "Liberation Serif", serif;
    text-align: right;
}
```
